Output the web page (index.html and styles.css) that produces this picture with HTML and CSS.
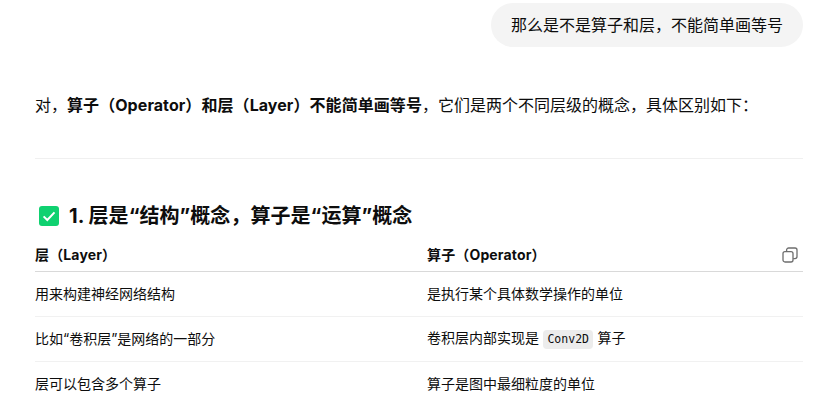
FILE: index.html
```html
<!DOCTYPE html>
<html lang="zh-CN">
<head>
  <meta charset="UTF-8" />
  <title>算子和层</title>
  <link rel="stylesheet" href="styles.css">
</head>
<body>
  <div class="chat">
    <div class="bubble">那么是不是算子和层，不能简单画等号</div>

    <p class="intro">对，<strong>算子（Operator）和层（Layer）不能简单画等号</strong>，它们是两个不同层级的概念，具体区别如下：</p>

    <hr class="divider">

    <h3 class="section-title">
      <svg class="check" viewBox="0 0 20 20" aria-hidden="true">
        <rect x="0" y="0" width="20" height="20" rx="3" fill="#0fd170"/>
        <path d="M4.6 10.4l3.7 3.6 7.2-7.6" fill="none" stroke="#fff" stroke-width="2"/>
      </svg>
      1. 层是“结构”概念，算子是“运算”概念
    </h3>

    <div class="table-wrap">
      <button class="copy" aria-label="复制">
        <svg viewBox="0 0 16 16" width="16" height="16" fill="none" stroke="#6e6e6e" stroke-width="1.3">
          <rect x="1" y="4.6" width="10" height="10.4" rx="2"/>
          <path d="M4.6 4.4V3a2 2 0 0 1 2-2H13a2 2 0 0 1 2 2v6.6a2 2 0 0 1-2 2h-1.8"/>
        </svg>
      </button>
      <table>
        <thead>
          <tr><th class="col-layer">层（Layer）</th><th>算子（Operator）</th></tr>
        </thead>
        <tbody>
          <tr><td>用来构建神经网络结构</td><td>是执行某个具体数学操作的单位</td></tr>
          <tr><td>比如“卷积层”是网络的一部分</td><td>卷积层内部实现是 <code>Conv2D</code> 算子</td></tr>
          <tr><td>层可以包含多个算子</td><td>算子是图中最细粒度的单位</td></tr>
        </tbody>
      </table>
    </div>
  </div>
</body>
</html>
```

FILE: styles.css
```css
html, body {
  margin: 0;
  height: 400px;
  overflow: hidden;
  background: #fff;
}
body {
  font-family: "Inter", "Noto Sans CJK SC", sans-serif;
  color: #0d0d0d;
}
.chat {
  display: flex;
  flex-direction: column;
  padding: 3px 30px 0 35px;
}
.bubble {
  align-self: flex-end;
  background: #f4f4f4;
  border-radius: 22px;
  padding: 10px 20px;
  font-size: 16px;
  line-height: 24px;
}
.intro {
  margin: 45px 0 0;
  font-size: 16px;
  line-height: 26px;
}
.intro strong {
  font-weight: 700;
  letter-spacing: 0.07px;
}
.divider {
  border: none;
  border-top: 1px solid #f0f0f0;
  margin: 40px 0 0;
}
.section-title {
  display: flex;
  align-items: center;
  gap: 10px;
  margin: 44px 0 0 4px;
  font-size: 20px;
  line-height: 26px;
  font-weight: 700;
  letter-spacing: 0.05px;
}
.check {
  width: 20px;
  height: 20px;
}
.table-wrap {
  position: relative;
  margin-top: 11px;
}
table {
  width: 100%;
  border-collapse: collapse;
  table-layout: fixed;
  font-size: 14px;
}
th {
  text-align: left;
  font-weight: 700;
  height: 27px;
  padding: 0 0 4px;
  border-bottom: 1px solid #d9d9d9;
  letter-spacing: 0.15px;
}
.col-layer {
  width: 392px;
}
td {
  height: 42px;
  padding: 0 0 2px;
  border-bottom: 1px solid #f1f1f1;
}
tbody tr:last-child td {
  border-bottom: none;
}
code {
  display: inline-block;
  font-family: "DejaVu Sans Mono", monospace;
  font-size: 11.5px;
  line-height: 19px;
  padding: 0 4.5px;
  background: #ececec;
  border-radius: 4px;
}
.copy {
  position: absolute;
  top: 7px;
  right: 5px;
  width: 16px;
  height: 16px;
  padding: 0;
  border: none;
  background: none;
}
```
